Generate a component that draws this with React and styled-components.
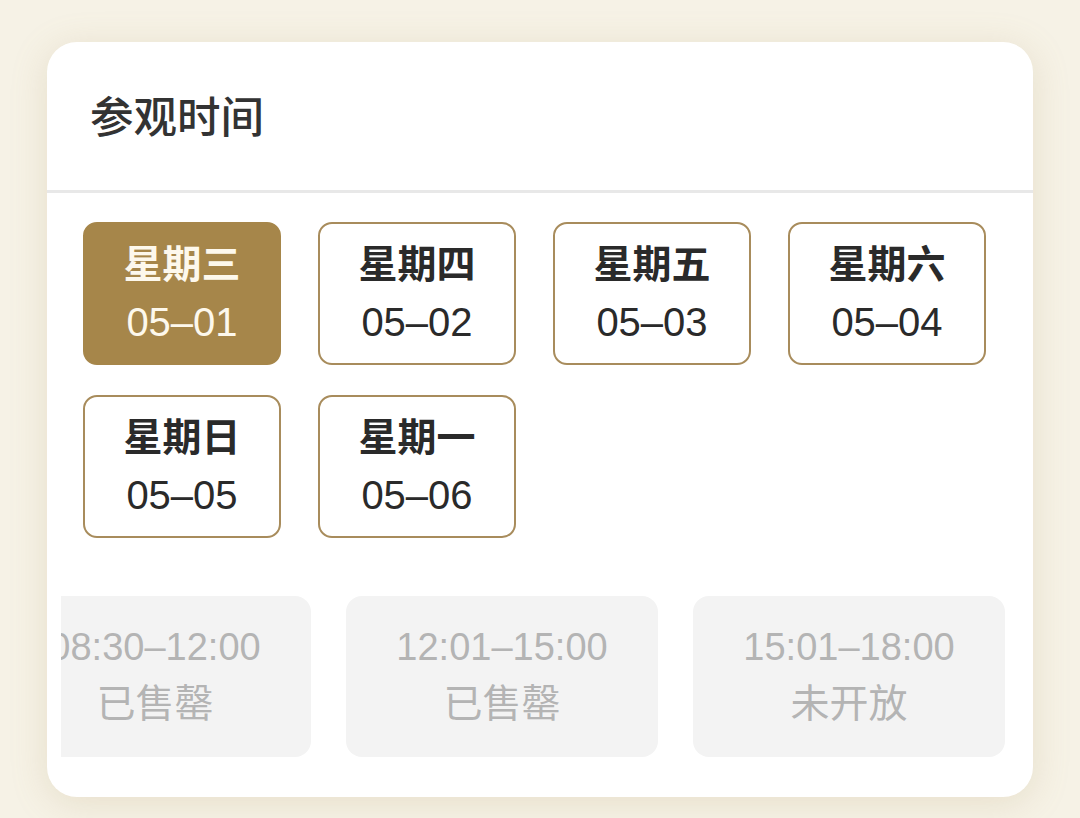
import React, { useLayoutEffect, useRef } from 'react';
import styled, { createGlobalStyle } from 'styled-components';

const GlobalStyle = createGlobalStyle`
  html, body {
    margin: 0;
    padding: 0;
    background: #f6f2e6;
  }
  body {
    font-family: 'Liberation Sans', 'Noto Sans CJK SC', sans-serif;
  }
`;

const Page = styled.div`
  width: 1080px;
  height: 818px;
  padding: 42px 0 0 47px;
  box-sizing: border-box;
  overflow: hidden;
`;

const Card = styled.div`
  width: 986px;
  height: 755px;
  background: #fff;
  border-radius: 30px;
  box-shadow: 0 6px 36px rgba(176, 156, 104, 0.22);
  overflow: hidden;
  box-sizing: border-box;
`;

const Header = styled.div`
  height: 151px;
  display: flex;
  align-items: center;
  padding: 0 0 4px 43px;
  box-sizing: border-box;
  border-bottom: 3px solid #e8e8e8;
`;

const Title = styled.h2`
  margin: 0;
  font-family: 'Noto Sans CJK SC', sans-serif;
  font-size: 43.5px;
  font-weight: 500;
  color: #333;
`;

const DateGrid = styled.div`
  display: grid;
  grid-template-columns: repeat(4, 198px);
  gap: 30px 37px;
  padding: 29px 0 0 36px;
`;

const DateChip = styled.div`
  height: 143px;
  box-sizing: border-box;
  padding-bottom: 4px;
  border: 2px solid ${(p) => (p.$active ? '#a6864a' : '#a88c5c')};
  background: ${(p) => (p.$active ? '#a6864a' : '#fff')};
  color: ${(p) => (p.$active ? '#fdf8ec' : '#2a2a2a')};
  border-radius: 14px;
  display: flex;
  flex-direction: column;
  align-items: center;
  justify-content: center;
`;

const Week = styled.div`
  font-family: 'Noto Sans CJK SC', sans-serif;
  font-size: 39px;
  font-weight: 700;
  line-height: 57px;
  margin-bottom: 4px;
`;

const DateText = styled.div`
  font-size: 40px;
  line-height: 57px;
`;

const SlotScroller = styled.div`
  margin: 58px 14px 0;
  overflow-x: auto;
  scrollbar-width: none;
  &::-webkit-scrollbar {
    display: none;
  }
`;

const SlotRow = styled.div`
  display: flex;
  gap: 35px;
  width: max-content;
  padding-right: 14px;
`;

const Slot = styled.div`
  width: 312px;
  height: 161px;
  flex: none;
  box-sizing: border-box;
  padding-bottom: 10px;
  background: #f3f3f3;
  border-radius: 16px;
  display: flex;
  flex-direction: column;
  align-items: center;
  justify-content: center;
  color: #b4b4b4;
`;

const SlotTime = styled.div`
  font-size: 38px;
  line-height: 57px;
`;

const SlotStatus = styled.div`
  font-family: 'Noto Sans CJK SC', sans-serif;
  font-size: 39px;
  line-height: 49px;
`;

const dates = [
  { week: '星期三', date: '05–01', active: true },
  { week: '星期四', date: '05–02' },
  { week: '星期五', date: '05–03' },
  { week: '星期六', date: '05–04' },
  { week: '星期日', date: '05–05' },
  { week: '星期一', date: '05–06' },
];

const slots = [
  { time: '08:30–12:00', status: '已售罄' },
  { time: '12:01–15:00', status: '已售罄' },
  { time: '15:01–18:00', status: '未开放' },
];

const App = () => {
  const scroller = useRef(null);

  // the slot list is scrolled a little, so the first slot sits cut at the left
  useLayoutEffect(() => {
    if (scroller.current) scroller.current.scrollLeft = 63;
  }, []);

  return (
    <Page>
      <GlobalStyle />
      <Card>
        <Header>
          <Title>参观时间</Title>
        </Header>
        <DateGrid>
          {dates.map((d) => (
            <DateChip key={d.date} $active={d.active}>
              <Week>{d.week}</Week>
              <DateText>{d.date}</DateText>
            </DateChip>
          ))}
        </DateGrid>
        <SlotScroller ref={scroller}>
          <SlotRow>
            {slots.map((s) => (
              <Slot key={s.time}>
                <SlotTime>{s.time}</SlotTime>
                <SlotStatus>{s.status}</SlotStatus>
              </Slot>
            ))}
          </SlotRow>
        </SlotScroller>
      </Card>
    </Page>
  );
};

export default App;
